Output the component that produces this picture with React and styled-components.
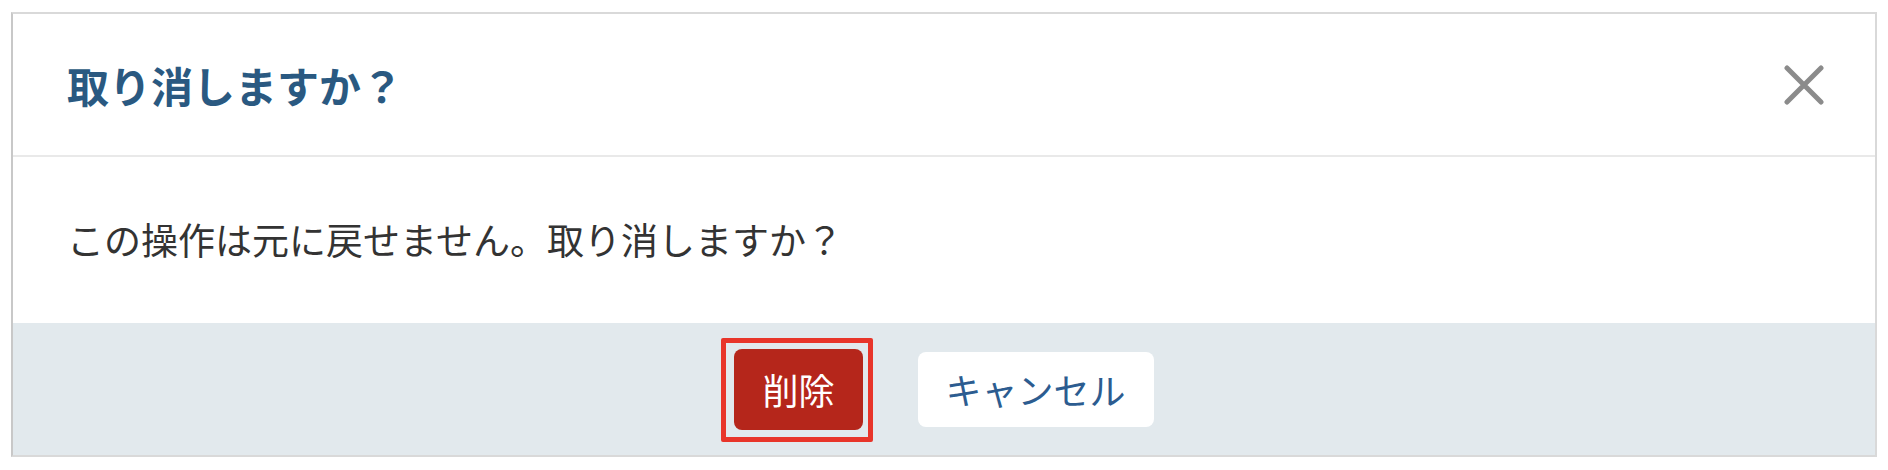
import React from 'react'
import styled, { createGlobalStyle } from 'styled-components'

const GlobalStyle = createGlobalStyle`
    html, body {
        margin: 0;
        padding: 0;
        background: #ffffff;
    }
    body {
        font-family: "Noto Sans CJK JP", "Noto Sans", sans-serif;
    }
`;

const Page = styled.div`
    padding: 12px 11px;
`;

const Dialog = styled.div`
    border: 2px solid #d9d9d9;
    border-left-color: #c8c8c8;
    background: #ffffff;
    display: flex;
    flex-direction: column;
`;

const Header = styled.div`
    height: 141px;
    display: flex;
    align-items: center;
    justify-content: space-between;
    padding: 0 50px 0 54px;
    border-bottom: 2px solid #e9e9e9;
`;

const Title = styled.h2`
    margin: 0;
    font-size: 42px;
    font-weight: 700;
    color: #2a5981;
    line-height: 1;
`;

const CloseButton = styled.button`
    border: none;
    background: none;
    padding: 0;
    width: 42px;
    height: 42px;
    display: flex;
    align-items: center;
    justify-content: center;
    cursor: pointer;
`;

const Body = styled.div`
    box-sizing: border-box;
    height: 166px;
    display: flex;
    align-items: center;
    padding: 0 54px 2px;
    font-size: 37px;
    color: #333333;
`;

const Footer = styled.div`
    height: 132px;
    background: #e2e9ed;
    display: flex;
    align-items: center;
    justify-content: center;
    gap: 55px;
`;

const Button = styled.button`
    position: relative;
    font-family: inherit;
    font-size: 36px;
    line-height: 1;
    border: none;
    border-radius: 8px;
    padding: 0 28px;
    cursor: pointer;
    height: ${p => (p.$danger ? '81px' : '75px')};
    background: ${p => (p.$danger ? '#b5261b' : '#ffffff')};
    color: ${p => (p.$danger ? '#ffffff' : '#2c5c90')};

    ${p => p.$focused && `
        &::after {
            content: "";
            position: absolute;
            inset: -11px -10px -12px -13px;
            border: 5px solid #e8352a;
            border-radius: 2px;
            pointer-events: none;
        }
    `}
`;

const CloseIcon = () => (
    <svg width="40" height="40" viewBox="0 0 40 40">
        <path d="M3 3 L37 37 M37 3 L3 37" stroke="#8b8b8b" strokeWidth="5" strokeLinecap="round" />
    </svg>
);

const App = () => {
    return (
        <>
            <GlobalStyle />
            <Page>
                <Dialog>
                    <Header>
                        <Title>取り消しますか？</Title>
                        <CloseButton aria-label="閉じる">
                            <CloseIcon />
                        </CloseButton>
                    </Header>
                    <Body>この操作は元に戻せません。取り消しますか？</Body>
                    <Footer>
                        <Button $danger $focused>削除</Button>
                        <Button>キャンセル</Button>
                    </Footer>
                </Dialog>
            </Page>
        </>
    )
}

export default App
